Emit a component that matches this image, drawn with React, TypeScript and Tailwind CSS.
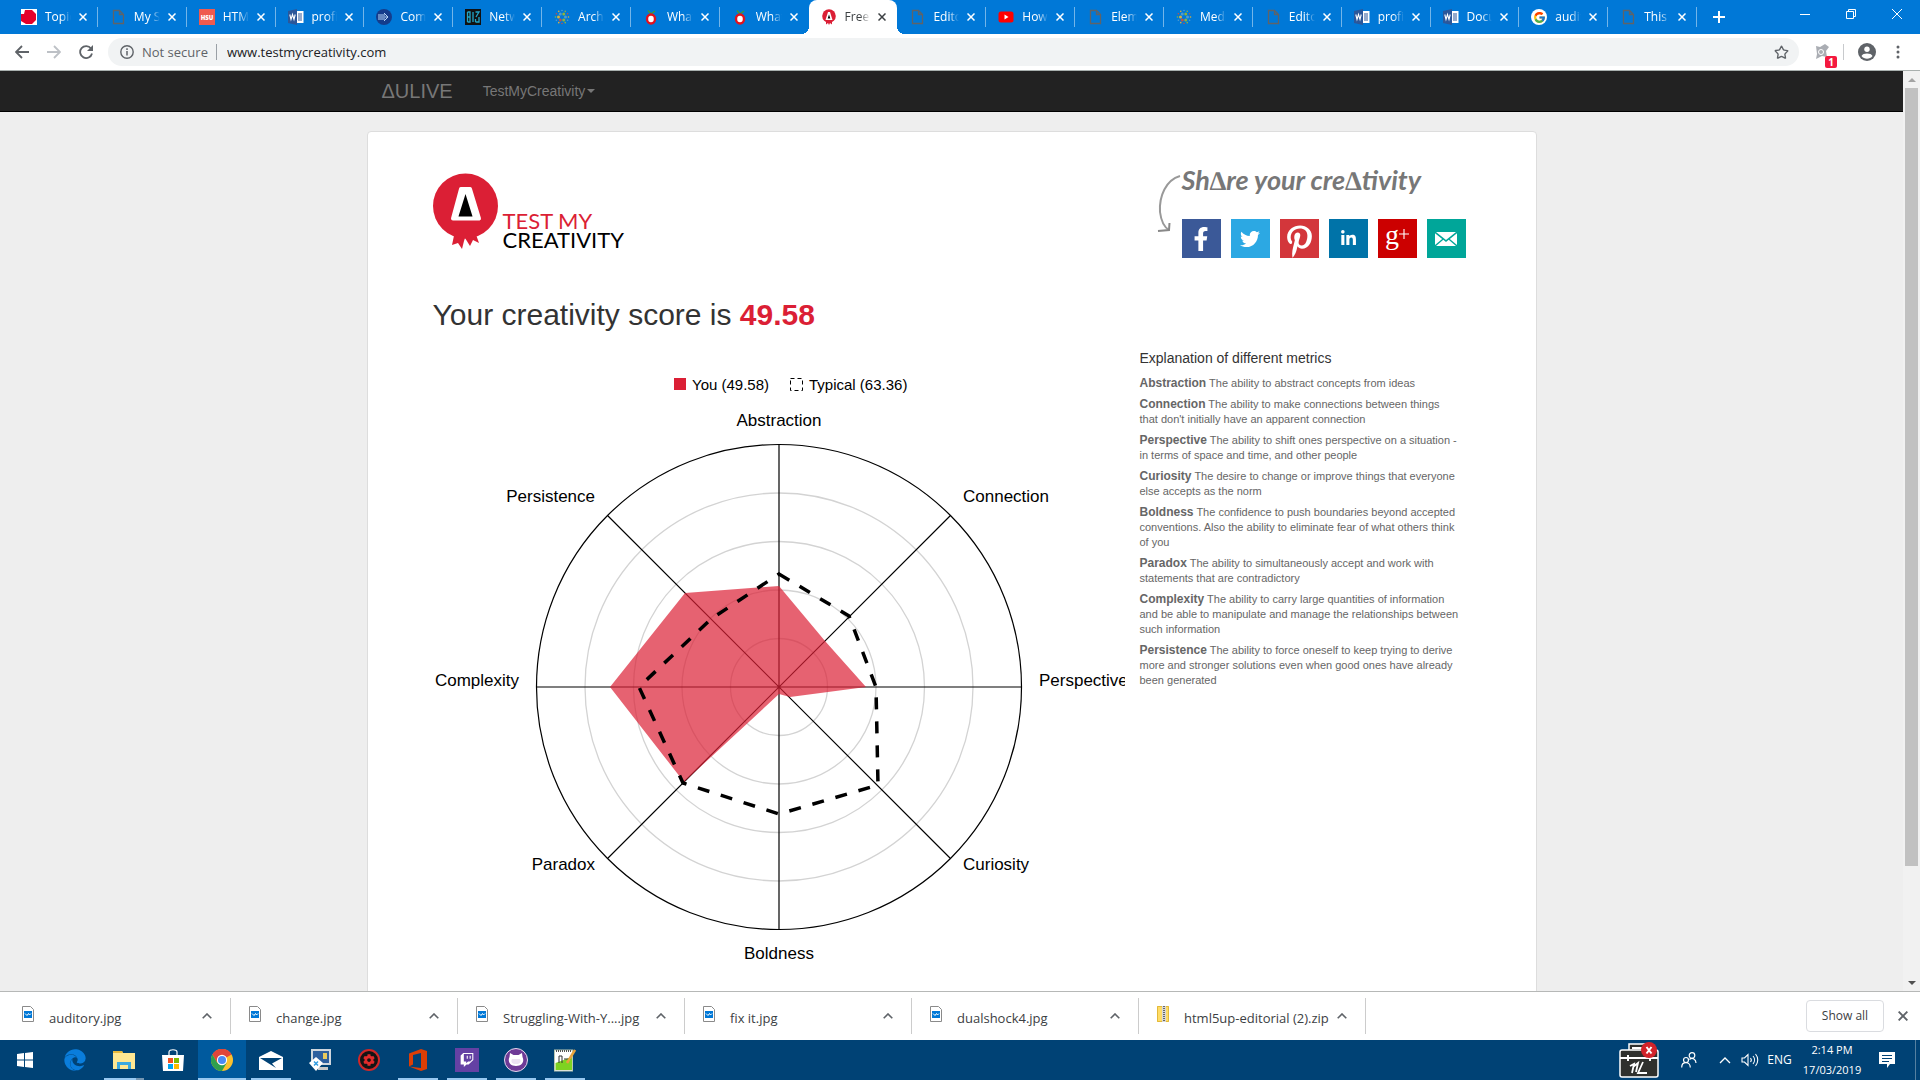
import React from "react";
import { FaFacebookF, FaTwitter, FaLinkedinIn, FaPinterestP, FaEdge, FaTwitch, FaGithubAlt, FaCog } from "react-icons/fa";
import { FcGoogle } from "react-icons/fc";
import { Star } from "lucide-react";

type Kind = "topic" | "page" | "hsu" | "word" | "com" | "biz" | "dots" | "berry" | "test" | "youtube" | "google";

const tabs: { icon: Kind; title: string }[] = [
  { icon: "topic", title: "Topic 3" },
  { icon: "page", title: "My Site" },
  { icon: "hsu", title: "HTML5" },
  { icon: "word", title: "profile" },
  { icon: "com", title: "Comp" },
  { icon: "biz", title: "Network" },
  { icon: "dots", title: "Archive" },
  { icon: "berry", title: "What is" },
  { icon: "berry", title: "What is" },
  { icon: "test", title: "Free" },
  { icon: "page", title: "Editorial" },
  { icon: "youtube", title: "How to" },
  { icon: "page", title: "Elements" },
  { icon: "dots", title: "Media" },
  { icon: "page", title: "Editorial" },
  { icon: "word", title: "profile" },
  { icon: "word", title: "Document" },
  { icon: "google", title: "auditory" },
  { icon: "page", title: "This" },
];

const dotColors = ["#d9b13b", "#4f9bd0", "#8cb43c", "#c0504d"];

function Favicon({ kind }: { kind: Kind }) {
  if (kind === "google")
    return (
      <span className="flex size-4 shrink-0 items-center justify-center rounded-full bg-white">
        <FcGoogle size={13} />
      </span>
    );
  return (
    <svg viewBox="0 0 16 16" className="size-4 shrink-0" aria-hidden="true">
      {kind === "topic" && (
        <>
          <rect width="16" height="16" fill="#fff" />
          <path d="M4 1h7l4 4v6l-4 4H5l-5-3V5h3z" fill="#e4002b" />
        </>
      )}
      {kind === "page" && (
        <path d="M3.500 1.500h6L13.500 5.500v9h-10zM9.500 1.500v4h4" fill="none" stroke="#5f6368" strokeWidth="1.300" />
      )}
      {kind === "hsu" && (
        <>
          <rect width="16" height="16" fill="#ef5a4f" />
          <text x="8" y="10.500" textAnchor="middle" fontSize="6" fontWeight="800" fill="#fff" fontFamily="Open Sans, sans-serif">HSU</text>
        </>
      )}
      {kind === "word" && (
        <>
          <rect x="8" y="2" width="7.500" height="12" fill="#fff" />
          <path d="M10 5h4M10 7h4M10 9h4M10 11h4" stroke="#2b579a" />
          <path d="M0 2l9-2v16l-9-2z" fill="#2b579a" />
          <path d="M1.800 5.500l1.200 5 1.500-5 1.500 5 1.200-5" stroke="#fff" fill="none" strokeWidth="1.100" />
        </>
      )}
      {kind === "com" && (
        <>
          <circle cx="8" cy="8" r="8" fill="#143c8c" />
          <path d="M2 6h7M2 8h10M2 10h7M8 4l4 4-4 4" stroke="#b7d5f5" fill="none" />
        </>
      )}
      {kind === "biz" && (
        <>
          <rect width="16" height="16" fill="#111" />
          <path d="M2.500 3v10M2.500 3h2.500v10H2.500M2.500 8H5M8 3v10M10.500 3H14l-3 5M10.500 13H14V8M10.500 10v3" stroke="#21a6c9" fill="none" strokeWidth="1.300" />
        </>
      )}
      {kind === "dots" &&
        [6.5, 3.5].map((r, k) =>
          Array.from({ length: k ? 6 : 12 }, (_, i) => {
            const a = (i * Math.PI * 2) / (k ? 6 : 12);
            return <circle key={`${k}-${i}`} cx={8 + r * Math.cos(a)} cy={8 + r * Math.sin(a)} r={k ? 1.5 : 0.8} fill={dotColors[(i + k) % 4]} />;
          })
        )}
      {kind === "berry" && (
        <>
          <path d="M8 5L5 1.500M8 5l4-3" stroke="#3f9b3a" strokeWidth="1.500" />
          <ellipse cx="8" cy="10" rx="4" ry="4.500" fill="#fff" stroke="#e3101c" strokeWidth="2.400" />
        </>
      )}
      {kind === "test" && (
        <>
          <path d="M5 12l0 3.500 2-1.500 1 2 1-2 2 1.500V12z" fill="#db1f35" />
          <circle cx="8" cy="7" r="6.800" fill="#db1f35" />
          <path d="M7 3h2l2.500 8h-7z" fill="#fff" />
          <path d="M8 5.500l1.300 4H6.700z" fill="#000" />
        </>
      )}
      {kind === "youtube" && (
        <>
          <rect x="0.500" y="2.500" width="15" height="11" rx="2.500" fill="#f00" />
          <path d="M6.500 5.500v5l4-2.500z" fill="#fff" />
        </>
      )}
    </svg>
  );
}

function Cross({ className }: { className: string }) {
  return (
    <svg viewBox="0 0 8 8" className={className} aria-hidden="true">
      <path d="M0.500 0.500l7 7M7.500 0.500l-7 7" stroke="currentColor" strokeWidth="1.500" />
    </svg>
  );
}

function TabStrip() {
  return (
    <div className="flex h-[34px] shrink-0 bg-[#0078d7]">
      <div className="flex min-w-0 flex-1 pl-[9px]">
        {tabs.map((t, i) => {
          const active = i === 9;
          const plain = active || i === 8;
          return (
            <div
              key={i}
              className={
                "relative flex min-w-0 flex-1 items-center text-xs " +
                (active ? "rounded-t-lg bg-white text-[#3c4043]" : "text-white")
              }
            >
              <button className="flex min-w-0 flex-1 items-center gap-2 pl-3 text-left">
                <Favicon kind={t.icon} />
                <span className="min-w-0 flex-1 overflow-hidden whitespace-nowrap [mask-image:linear-gradient(90deg,#000_60%,transparent)]">
                  {t.title}
                </span>
              </button>
              <button aria-label={`Close ${t.title}`} className="ml-2 mr-[11px]">
                <Cross className="size-2" />
              </button>
              {!plain && <span className="absolute right-0 top-[7px] h-5 w-px bg-white/45" />}
              {active && (
                <>
                  <span className="absolute -left-2 bottom-0 size-2 bg-[radial-gradient(circle_at_0_0,transparent_8px,#fff_8px)]" />
                  <span className="absolute -right-2 bottom-0 size-2 bg-[radial-gradient(circle_at_100%_0,transparent_8px,#fff_8px)]" />
                </>
              )}
            </div>
          );
        })}
      </div>
      <div className="flex w-[223px] shrink-0 justify-between text-white">
        <button aria-label="New tab" className="flex w-11 items-center justify-center">
          <svg viewBox="0 0 12 12" className="size-3"><path d="M6 0v12M0 6h12" stroke="currentColor" strokeWidth="2" /></svg>
        </button>
        <div className="flex h-7">
          <button aria-label="Minimize" className="flex w-[46px] items-center justify-center"><span className="h-px w-2.5 bg-white" /></button>
          <button aria-label="Restore" className="flex w-[46px] items-center justify-center">
            <svg viewBox="0 0 10 10" className="size-2.5"><path d="M.5 2.500h7v7h-7zM2.500 2.500v-2h7v7h-2" fill="none" stroke="currentColor" /></svg>
          </button>
          <button aria-label="Close window" className="flex w-[46px] items-center justify-center">
            <svg viewBox="0 0 10 10" className="size-2.5"><path d="M0 0l10 10M10 0L0 10" stroke="currentColor" /></svg>
          </button>
        </div>
      </div>
    </div>
  );
}

function Toolbar() {
  return (
    <div className="flex h-[37px] shrink-0 items-center border-b border-[#a9b0ae] bg-white pl-1.5 text-[#5f6368]">
      <button aria-label="Back" className="flex w-8 justify-center">
        <svg viewBox="0 0 14 14" className="size-3.5"><path d="M14 7H1.500M7 1L1 7l6 6" fill="none" stroke="currentColor" strokeWidth="1.800" /></svg>
      </button>
      <button aria-label="Forward" className="flex w-8 justify-center text-[#bdc1c6]">
        <svg viewBox="0 0 14 14" className="size-3.5"><path d="M0 7h12.500M7 1l6 6-6 6" fill="none" stroke="currentColor" strokeWidth="1.800" /></svg>
      </button>
      <button aria-label="Reload" className="flex w-8 justify-center">
        <svg viewBox="0 0 14 14" className="size-3.5"><path d="M12 3.500A6 6 0 1 0 13 8.500" fill="none" stroke="currentColor" strokeWidth="1.800" /><path d="M14 0v6H8z" fill="currentColor" /></svg>
      </button>
      <div className="ml-1.5 flex h-7 flex-1 items-center rounded-full bg-[#f1f3f4] pl-3 pr-2.5 text-sm">
        <svg viewBox="0 0 14 14" className="size-3.5"><circle cx="7" cy="7" r="6.200" fill="none" stroke="currentColor" strokeWidth="1.400" /><path d="M7 6v4.500M7 3.300v1.600" stroke="currentColor" strokeWidth="1.500" /></svg>
        <label htmlFor="url" className="ml-2 text-[13px]">Not secure</label>
        <span className="ml-2 h-4 w-px bg-[#9aa0a6]" />
        <input id="url" className="ml-2.5 min-w-0 flex-1 bg-transparent text-[13px] text-[#202124] outline-none" defaultValue="www.testmycreativity.com" />
        <button aria-label="Bookmark this page"><Star size={15} strokeWidth={2.2} /></button>
      </div>
      <button aria-label="Extension" className="relative ml-3.5 mr-3.5">
        <svg viewBox="0 0 16 16" className="size-4"><path d="M3 2l4 1 5-3 4 3-3 4 1 6-5-1-6 3 1-5z" fill="#aaadb3" /><circle cx="8" cy="8" r="2.500" fill="none" stroke="#fff" /></svg>
        <span className="absolute -bottom-2 -right-2 flex h-3 w-3 items-center justify-center rounded-xs bg-[#f4193f] text-[10px] font-bold text-white">1</span>
      </button>
      <span className="h-4 w-px bg-[#c8cacd]" />
      <button aria-label="Profile" className="ml-3.5">
        <svg viewBox="0 0 18 18" className="size-[18px]"><circle cx="9" cy="9" r="9" fill="currentColor" /><circle cx="9" cy="6.300" r="2.700" fill="#fff" /><path d="M3.500 13c1.200-3.300 9.800-3.300 11 0-2.500 3.500-8.500 3.500-11 0z" fill="#fff" /></svg>
      </button>
      <button aria-label="Menu" className="flex w-11 justify-center">
        <svg viewBox="0 0 4 14" className="h-3.5 w-1"><circle cx="2" cy="2" r="1.500" fill="currentColor" /><circle cx="2" cy="7" r="1.500" fill="currentColor" /><circle cx="2" cy="12" r="1.500" fill="currentColor" /></svg>
      </button>
    </div>
  );
}

const metrics = [
  ["Abstraction", "The ability to abstract concepts from ideas"],
  ["Connection", "The ability to make connections between things that don't initially have an apparent connection"],
  ["Perspective", "The ability to shift ones perspective on a situation - in terms of space and time, and other people"],
  ["Curiosity", "The desire to change or improve things that everyone else accepts as the norm"],
  ["Boldness", "The confidence to push boundaries beyond accepted conventions. Also the ability to eliminate fear of what others think of you"],
  ["Paradox", "The ability to simultaneously accept and work with statements that are contradictory"],
  ["Complexity", "The ability to carry large quantities of information and be able to manipulate and manage the relationships between such information"],
  ["Persistence", "The ability to force oneself to keep trying to derive more and stronger solutions even when good ones have already been generated"],
];

const labels: [string, number, number, "start" | "middle" | "end"][] = [
  ["Abstraction", 346, 67, "middle"],
  ["Connection", 530, 143, "start"],
  ["Perspective", 606, 327, "start"],
  ["Curiosity", 530, 511, "start"],
  ["Boldness", 346, 600, "middle"],
  ["Paradox", 162, 511, "end"],
  ["Persistence", 162, 143, "end"],
  ["Complexity", 86, 327, "end"],
];

function RadarChart() {
  const r = 242.5;
  const d = r * Math.SQRT1_2;
  return (
    <svg viewBox="0 0 692 640" className="block w-full overflow-hidden" role="img" aria-label="Creativity metrics" fontFamily="Liberation Sans, Arial, sans-serif">
      <rect x="241" y="19" width="12" height="12" fill="#db1f35" />
      <rect x="357.500" y="19.500" width="12" height="12" fill="none" stroke="#000" strokeDasharray="4 3" />
      <text x="259" y="31" fontSize="15">You (49.58)</text>
      <text x="376" y="31" fontSize="15">Typical (63.36)</text>
      <g transform="translate(346 328)">
        {[1, 2, 3, 4].map((k) => (
          <circle key={k} r={48.5 * k} fill="none" stroke="#d3d3d3" strokeWidth="1.300" />
        ))}
        <circle r={r} fill="none" stroke="#000" strokeWidth="1.200" />
        <path d={`M0 ${-r}V${r}M${-r} 0H${r}M${-d} ${-d}L${d} ${d}M${-d} ${d}L${d} ${-d}`} stroke="#000" strokeWidth="1.200" />
        <polygon points="0,-101 46,-46 87,0 11,10 0,7 -95,95 -169,0 -94,-94" fill="#db1f35" fillOpacity="0.700" />
        <polygon points="0,-113 70,-71 97,0 99,98 0,127 -96,96 -140,0 -68,-68" fill="none" stroke="#000" strokeWidth="3.500" strokeDasharray="12 12" />
      </g>
      {labels.map(([t, x, y, a]) => (
        <text key={t} x={x} y={y} textAnchor={a} fontSize="17">{t}</text>
      ))}
    </svg>
  );
}

function Logo() {
  return (
    <a href="#home" className="flex items-end">
      <svg viewBox="0 0 66 76" className="h-[76px] w-[66px]" aria-hidden="true">
        <path d="M22 58L19 72l6-2 4 6 2-8 1-3 5 8 3-6 6 3-5-14z" fill="#db1f35" />
        <circle cx="32.500" cy="33" r="32.500" fill="#db1f35" />
        <path d="M28 16h9l9 29.500H20z" fill="#fff" stroke="#fff" strokeWidth="4" strokeLinejoin="round" />
        <path d="M32.500 21L39.500 43.500H25.500z" fill="#000" />
      </svg>
      <span className="ml-1 flex flex-col font-['Lato',sans-serif] text-[22px]/[19px] text-black">
        <span className="text-[#db1f35]">TEST MY</span>
        <span>CREATIVITY</span>
      </span>
    </a>
  );
}

const share = "flex size-[39px] justify-center text-white ";

function SharePanel() {
  return (
    <div className="flex">
      <svg viewBox="0 0 25 94" className="h-[94px] w-[25px]" aria-hidden="true">
        <path d="M23 12C9 16 2 32 3 48c1 8 4 15 9 18" fill="none" stroke="#999" strokeWidth="2" />
        <path d="M1 67l11-1 .500-7" fill="none" stroke="#888" strokeWidth="2" />
      </svg>
      <div className="flex flex-col justify-between">
        <p className="font-['Lato',cursive] text-[27px]/[32px] font-bold italic text-[#777]">Sh∆re your cre∆tivity</p>
        <div className="flex gap-2.5">
          <a href="#facebook" aria-label="Facebook" className={share + "items-center bg-[#3b5998]"}><FaFacebookF size={24} /></a>
          <a href="#twitter" aria-label="Twitter" className={share + "items-center bg-[#2ca8e3]"}><FaTwitter size={20} /></a>
          <a href="#pinterest" aria-label="Pinterest" className={share + "items-end bg-[#d3363b]"}><FaPinterestP size={33} /></a>
          <a href="#linkedin" aria-label="LinkedIn" className={share + "items-center bg-[#0073a8]"}><FaLinkedinIn size={17} /></a>
          <a href="#googleplus" aria-label="Google Plus" className={share + "items-center bg-[#cc0000]"}>
            <span className="pb-2 font-['Liberation_Serif',serif] text-[28px]/[28px]">g</span>
            <svg viewBox="0 0 9 9" className="mb-2.5 size-2.5"><path d="M4.500 0v9M0 4.500h9" stroke="#fff" /></svg>
          </a>
          <a href="#mail" aria-label="Email" className={share + "items-center bg-[#00a699]"}>
            <svg viewBox="0 0 22 14" className="h-3.5 w-[22px]"><path d="M1 0h20l-10 8zM0 1.200L7.200 7 0 13zM22 1.200L14.800 7 22 13zM1 14l7.300-6.200L11 10l2.700-2.200L21 14z" fill="#fff" /></svg>
          </a>
        </div>
      </div>
    </div>
  );
}

function Page() {
  return (
    <div className="flex min-h-0 flex-1 overflow-hidden font-['Liberation_Sans',Arial,sans-serif]">
      <div className="min-w-0 flex-1 overflow-hidden bg-[#eee]">
        <nav className="flex h-[41px] items-center border-b border-black bg-[#222] text-[#777]">
          <div className="mx-auto flex w-full max-w-[1170px] items-center px-[15px]">
            <a href="#top" className="text-xl">ΔULIVE</a>
            <button className="ml-[30px] flex items-center text-sm">
              TestMyCreativity
              <span className="ml-0.5 border-x-4 border-t-4 border-x-transparent border-t-[#777]" />
            </button>
          </div>
        </nav>
        <main className="mx-auto mt-[19px] max-w-[1170px] rounded border border-[#ddd] bg-white pl-[65px] pr-[70px] pt-8">
          <header className="flex justify-between">
            <div className="pt-[9px]"><Logo /></div>
            <SharePanel />
          </header>
          <h1 className="mt-10 text-3xl/[34px] text-[#333]">
            Your creativity score is <strong className="text-[#db1f35]">49.58</strong>
          </h1>
          <div className="mt-[18px] flex gap-[15px]">
            <div className="min-w-0 flex-1 basis-[692px] pt-[9px]"><RadarChart /></div>
            <aside className="w-[326px] shrink-0 pr-[7px] text-[11px]/[15px] text-[#666]">
              <h2 className="mb-2.5 text-sm/[16px] text-[#333]">Explanation of different metrics</h2>
              {metrics.map(([name, text]) => (
                <p key={name} className="mb-1.5">
                  <strong className="text-xs/[15px]">{name}</strong> {text}
                </p>
              ))}
            </aside>
          </div>
        </main>
      </div>
      <div className="flex w-[17px] shrink-0 flex-col items-center bg-[#f1f1f1]">
        <span className="flex h-[17px] shrink-0 items-center"><span className="border-x-4 border-b-4 border-x-transparent border-b-[#a3a3a3]" /></span>
        <span className="w-[13px] flex-[778] bg-[#c1c1c1]" />
        <span className="flex-[108]" />
        <span className="flex h-[17px] shrink-0 items-center"><span className="border-x-4 border-t-4 border-x-transparent border-t-[#505050]" /></span>
      </div>
    </div>
  );
}

const downloads = ["auditory.jpg", "change.jpg", "Struggling-With-Y....jpg", "fix it.jpg", "dualshock4.jpg", "html5up-editorial (2).zip"];

function Downloads() {
  return (
    <div className="flex h-[49px] shrink-0 items-center border-t border-[#b6b8b7] bg-white pl-1 pr-3 text-[#5f6368]">
      {downloads.map((d) => (
        <div key={d} className="flex h-9 w-[227px] items-center border-r border-[#ccc] pl-[18px]">
          <button className="flex min-w-0 flex-1 items-center text-left">
            <svg viewBox="0 0 12 16" className="mb-1 h-4 w-3 shrink-0" aria-hidden="true">
              {d.endsWith(".zip") ? (
                <>
                  <rect width="12" height="16" fill="#ffdc66" />
                  <path d="M.5.5h11v15H.5z" fill="none" stroke="#e2b93b" />
                  <rect x="5" width="4" height="16" fill="#d8d8d8" />
                  <path d="M7 0v16" stroke="#666" strokeWidth="2" strokeDasharray="1 1" />
                </>
              ) : (
                <>
                  <path d="M.5.500h8l3 3v12H.5z" fill="#fff" stroke="#8a8a8a" />
                  <rect x="2" y="5" width="8" height="7" fill="#0078d7" />
                  <path d="M3 7.500l2 2 1.500-2 1 1.500L9 7.500" stroke="#fff" fill="none" />
                </>
              )}
            </svg>
            <span className="ml-[15px] mt-1.5 whitespace-nowrap text-[13px] text-[#3c4043]">{d}</span>
          </button>
          <button aria-label={`Options for ${d}`} className="mr-[18px]">
            <svg viewBox="0 0 10 6" className="h-1.5 w-2.5"><path d="M.7 5.300L5 1l4.300 4.300" stroke="currentColor" strokeWidth="1.600" fill="none" /></svg>
          </button>
        </div>
      ))}
      <button className="ml-auto h-8 w-[78px] rounded border border-[#dadce0] text-xs text-[#3c4043]">Show all</button>
      <button aria-label="Close downloads" className="ml-3.5"><Cross className="size-2.5" /></button>
    </div>
  );
}

function ChromeIcon() {
  return (
    <svg viewBox="0 0 24 24" className="size-[22px]">
      <circle cx="12" cy="12" r="12" fill="#fbc02d" />
      <path d="M12 12L1.600 6A12 12 0 0 1 22.400 6z" fill="#e0453a" />
      <path d="M12 6h10.400A12 12 0 0 0 1.600 6l5.200 9z" fill="#e0453a" />
      <path d="M1.600 6A12 12 0 0 0 12 24l5.200-9L12 17.500 6.800 15z" fill="#2fa04e" />
      <circle cx="12" cy="12" r="5.600" fill="#fff" />
      <circle cx="12" cy="12" r="4.400" fill="#4a8af4" />
    </svg>
  );
}

const apps: { name: string; state: "none" | "open" | "active" | "multi"; icon: React.ReactNode }[] = [
  {
    name: "Edge", state: "none",
    icon: <FaEdge size={22} color="#0a7ddb" />,
  },
  {
    name: "File Explorer", state: "multi",
    icon: (
      <svg viewBox="0 0 22 18" className="h-[18px] w-[22px]">
        <path d="M0 0h9l1 2h12v16H0z" fill="#ffe792" /><path d="M0 0h9l1 2H0z" fill="#e8b93c" />
        <path d="M4 18v-7h14v7h-3v-4H7v4z" fill="#3ba9e0" />
      </svg>
    ),
  },
  {
    name: "Store", state: "none",
    icon: (
      <svg viewBox="0 0 22 22" className="size-[22px]">
        <path d="M7 6V3c0-3 8-3 8 0v3" fill="none" stroke="#fff" strokeWidth="1.200" /><path d="M0 6h22l-1 16H1z" fill="#fff" />
        <path d="M6 9h5v5H6z" fill="#f25022" /><path d="M12 9h5v5h-5z" fill="#7fba00" /><path d="M6 15h5v5H6z" fill="#00a4ef" /><path d="M12 15h5v5h-5z" fill="#ffb900" />
      </svg>
    ),
  },
  { name: "Chrome", state: "active", icon: <ChromeIcon /> },
  {
    name: "Mail", state: "open",
    icon: (
      <svg viewBox="0 0 24 19" className="h-[19px] w-6"><path d="M0 6l12-6 12 6v13H0z" fill="#fff" /><path d="M1 7h22l-10 5.500 4 4.500z" fill="#004275" /></svg>
    ),
  },
  {
    name: "Remote Desktop", state: "none",
    icon: (
      <svg viewBox="0 0 22 22" className="size-[22px]">
        <rect x="3" y="1" width="18" height="14" fill="#2d5f9e" stroke="#cfd6dd" strokeWidth="2" /><path d="M9 18h10v3H9z" fill="#c8c8c8" /><rect x="14" y="4" width="4" height="6" fill="#e9c95c" />
        <path d="M0 14l7-6 7 6-7 8z" fill="#fff" /><path d="M5 12.500l4 4M9 12.500l-4 4" stroke="#2f9be0" strokeWidth="1.500" />
      </svg>
    ),
  },
  {
    name: "Game Center", state: "none",
    icon: (
      <span className="flex size-[22px] items-center justify-center rounded-full border-2 border-[#d12727] bg-[#141414] text-[#e02b2b]"><FaCog size={12} /></span>
    ),
  },
  {
    name: "Office", state: "open",
    icon: (
      <svg viewBox="0 0 18 22" className="h-[22px] w-[18px]"><path d="M0 4.500L12 0l6 2v18l-6 2L0 17.500l12 1.500V4L4 6v9.500l-4 2z" fill="#dc3e05" /></svg>
    ),
  },
  {
    name: "Twitch", state: "open",
    icon: <span className="flex size-6 items-center justify-center bg-[#6441a4] text-white"><FaTwitch size={14} /></span>,
  },
  {
    name: "GitHub", state: "open",
    icon: (
      <svg viewBox="0 0 24 24" className="size-6">
        <circle cx="12" cy="12" r="11.500" fill="#6e3a96" stroke="#e6d9ee" />
        <path d="M6 5l3.500 2h5L18 5l.500 4c2 4 0 9-6.500 9s-8.500-5-6.500-9z" fill="#fff" />
        <path d="M8 11h8c1.500 3 0 5-4 5s-5.500-2-4-5z" fill="#ece2f2" />
      </svg>
    ),
  },
  {
    name: "Notepad++", state: "open",
    icon: (
      <svg viewBox="0 0 22 24" className="h-6 w-[22px]">
        <rect x=".5" y="2" width="18" height="21" fill="#fff" stroke="#b9c7b3" /><path d="M1.500 15L18 9v13H1.500z" fill="#7ed321" />
        <path d="M2 3h16" stroke="#555" strokeWidth="2" strokeDasharray="1 1" /><path d="M5 15V8h3v7M10 11h7" stroke="#333" fill="none" /><path d="M21 2l-8 13" stroke="#e8a33d" strokeWidth="2.500" />
      </svg>
    ),
  },
];

function Taskbar() {
  return (
    <div className="flex h-10 shrink-0 bg-[#004275] text-white">
      <button aria-label="Start" className="flex w-[51px] items-center justify-center pr-0.5">
        <svg viewBox="0 0 16 16" className="size-4"><path d="M0 2l7-1v6.500H0zM8 1l8-1v7.500H8zM0 8.500h7V15l-7-1zM8 8.500h8V16l-8-1z" fill="#fff" /></svg>
      </button>
      <div className="flex gap-px">
        {apps.map((a) => (
          <button key={a.name} aria-label={a.name} className={"relative flex w-12 items-center justify-center " + (a.state === "active" ? "bg-[#005a9e]" : "")}>
            {a.icon}
            {a.state === "active" && <span className="absolute inset-x-0 bottom-0 h-0.5 bg-[#98c8f0]" />}
            {(a.state === "open" || a.state === "multi") && <span className="absolute inset-x-1 bottom-0 h-0.5 bg-[#98c8f0]" />}
            {a.state === "multi" && <span className="absolute bottom-0 right-1 h-0.5 w-2 bg-[#7496b3]" />}
          </button>
        ))}
      </div>
      <div className="ml-auto flex items-center text-xs">
        <button aria-label="Toolbox">
          <svg viewBox="0 0 40 36" className="h-9 w-10">
            <path d="M10 8V2h20v6" fill="#2f302d" stroke="#fff" strokeWidth="1.500" />
            <rect x="1" y="8" width="38" height="27" rx="2" fill="#2f302d" stroke="#fff" strokeWidth="1.500" />
            <path d="M13 6h10M1 16h38M9 13v6M31 13v6" stroke="#fff" strokeWidth="2" />
            <path d="M11 24l4-2-2 9M14 25l5-4-2 9M24 20l-5 11h9" fill="none" stroke="#fff" strokeWidth="1.800" />
            <circle cx="30" cy="8" r="8" fill="#d2232a" /><path d="M27.500 5l5 6.500M32.500 5l-5 6.500" stroke="#fff" strokeWidth="2" />
          </svg>
        </button>
        <button aria-label="People" className="ml-[22px]">
          <svg viewBox="0 0 16 16" className="size-4"><g fill="none" stroke="#fff" strokeWidth="1.200"><circle cx="5" cy="8" r="2.500" /><path d="M.7 15.500c0-6.500 8.600-6.500 8.600 0" /><circle cx="11" cy="3.500" r="2.800" /><path d="M8.500 7.500c3-2.500 6.500 0 6.500 3.500" /></g></svg>
        </button>
        <button aria-label="Hidden icons" className="ml-[22px]">
          <svg viewBox="0 0 12 8" className="h-2 w-3"><path d="M1 7l5-5 5 5" fill="none" stroke="#fff" strokeWidth="1.300" /></svg>
        </button>
        <button aria-label="Volume" className="ml-2.5">
          <svg viewBox="0 0 18 14" className="h-3.5 w-[18px]"><path d="M1 5v4h2.500L7 12.500v-11L3.500 5zM9.500 5c1 1.200 1 2.800 0 4M12 3c2 2.300 2 5.700 0 8M14.500 1c3 3.500 3 8.500 0 12" fill="none" stroke="#fff" strokeWidth="1.100" /></svg>
        </button>
        <button className="ml-[7px] w-[27px]">ENG</button>
        <button className="ml-1.5 w-[66px] text-center text-[11px]/[20px]">2:14 PM<br />17/03/2019</button>
        <button aria-label="Notifications" className="ml-3.5">
          <svg viewBox="0 0 16 16" className="size-4"><path d="M0 0h16v12h-5l-3 4v-4H0z" fill="#fff" /><path d="M3 3.500h10M3 6.500h10M3 9.500h7" stroke="#004275" /></svg>
        </button>
        <span className="ml-5 mr-1 h-10 w-px bg-[#5580a0]" />
      </div>
    </div>
  );
}

export default function App() {
  return (
    <div className="flex h-screen flex-col overflow-hidden bg-white font-['Open_Sans','Noto_Sans',sans-serif]">
      <TabStrip />
      <Toolbar />
      <Page />
      <Downloads />
      <Taskbar />
    </div>
  );
}
